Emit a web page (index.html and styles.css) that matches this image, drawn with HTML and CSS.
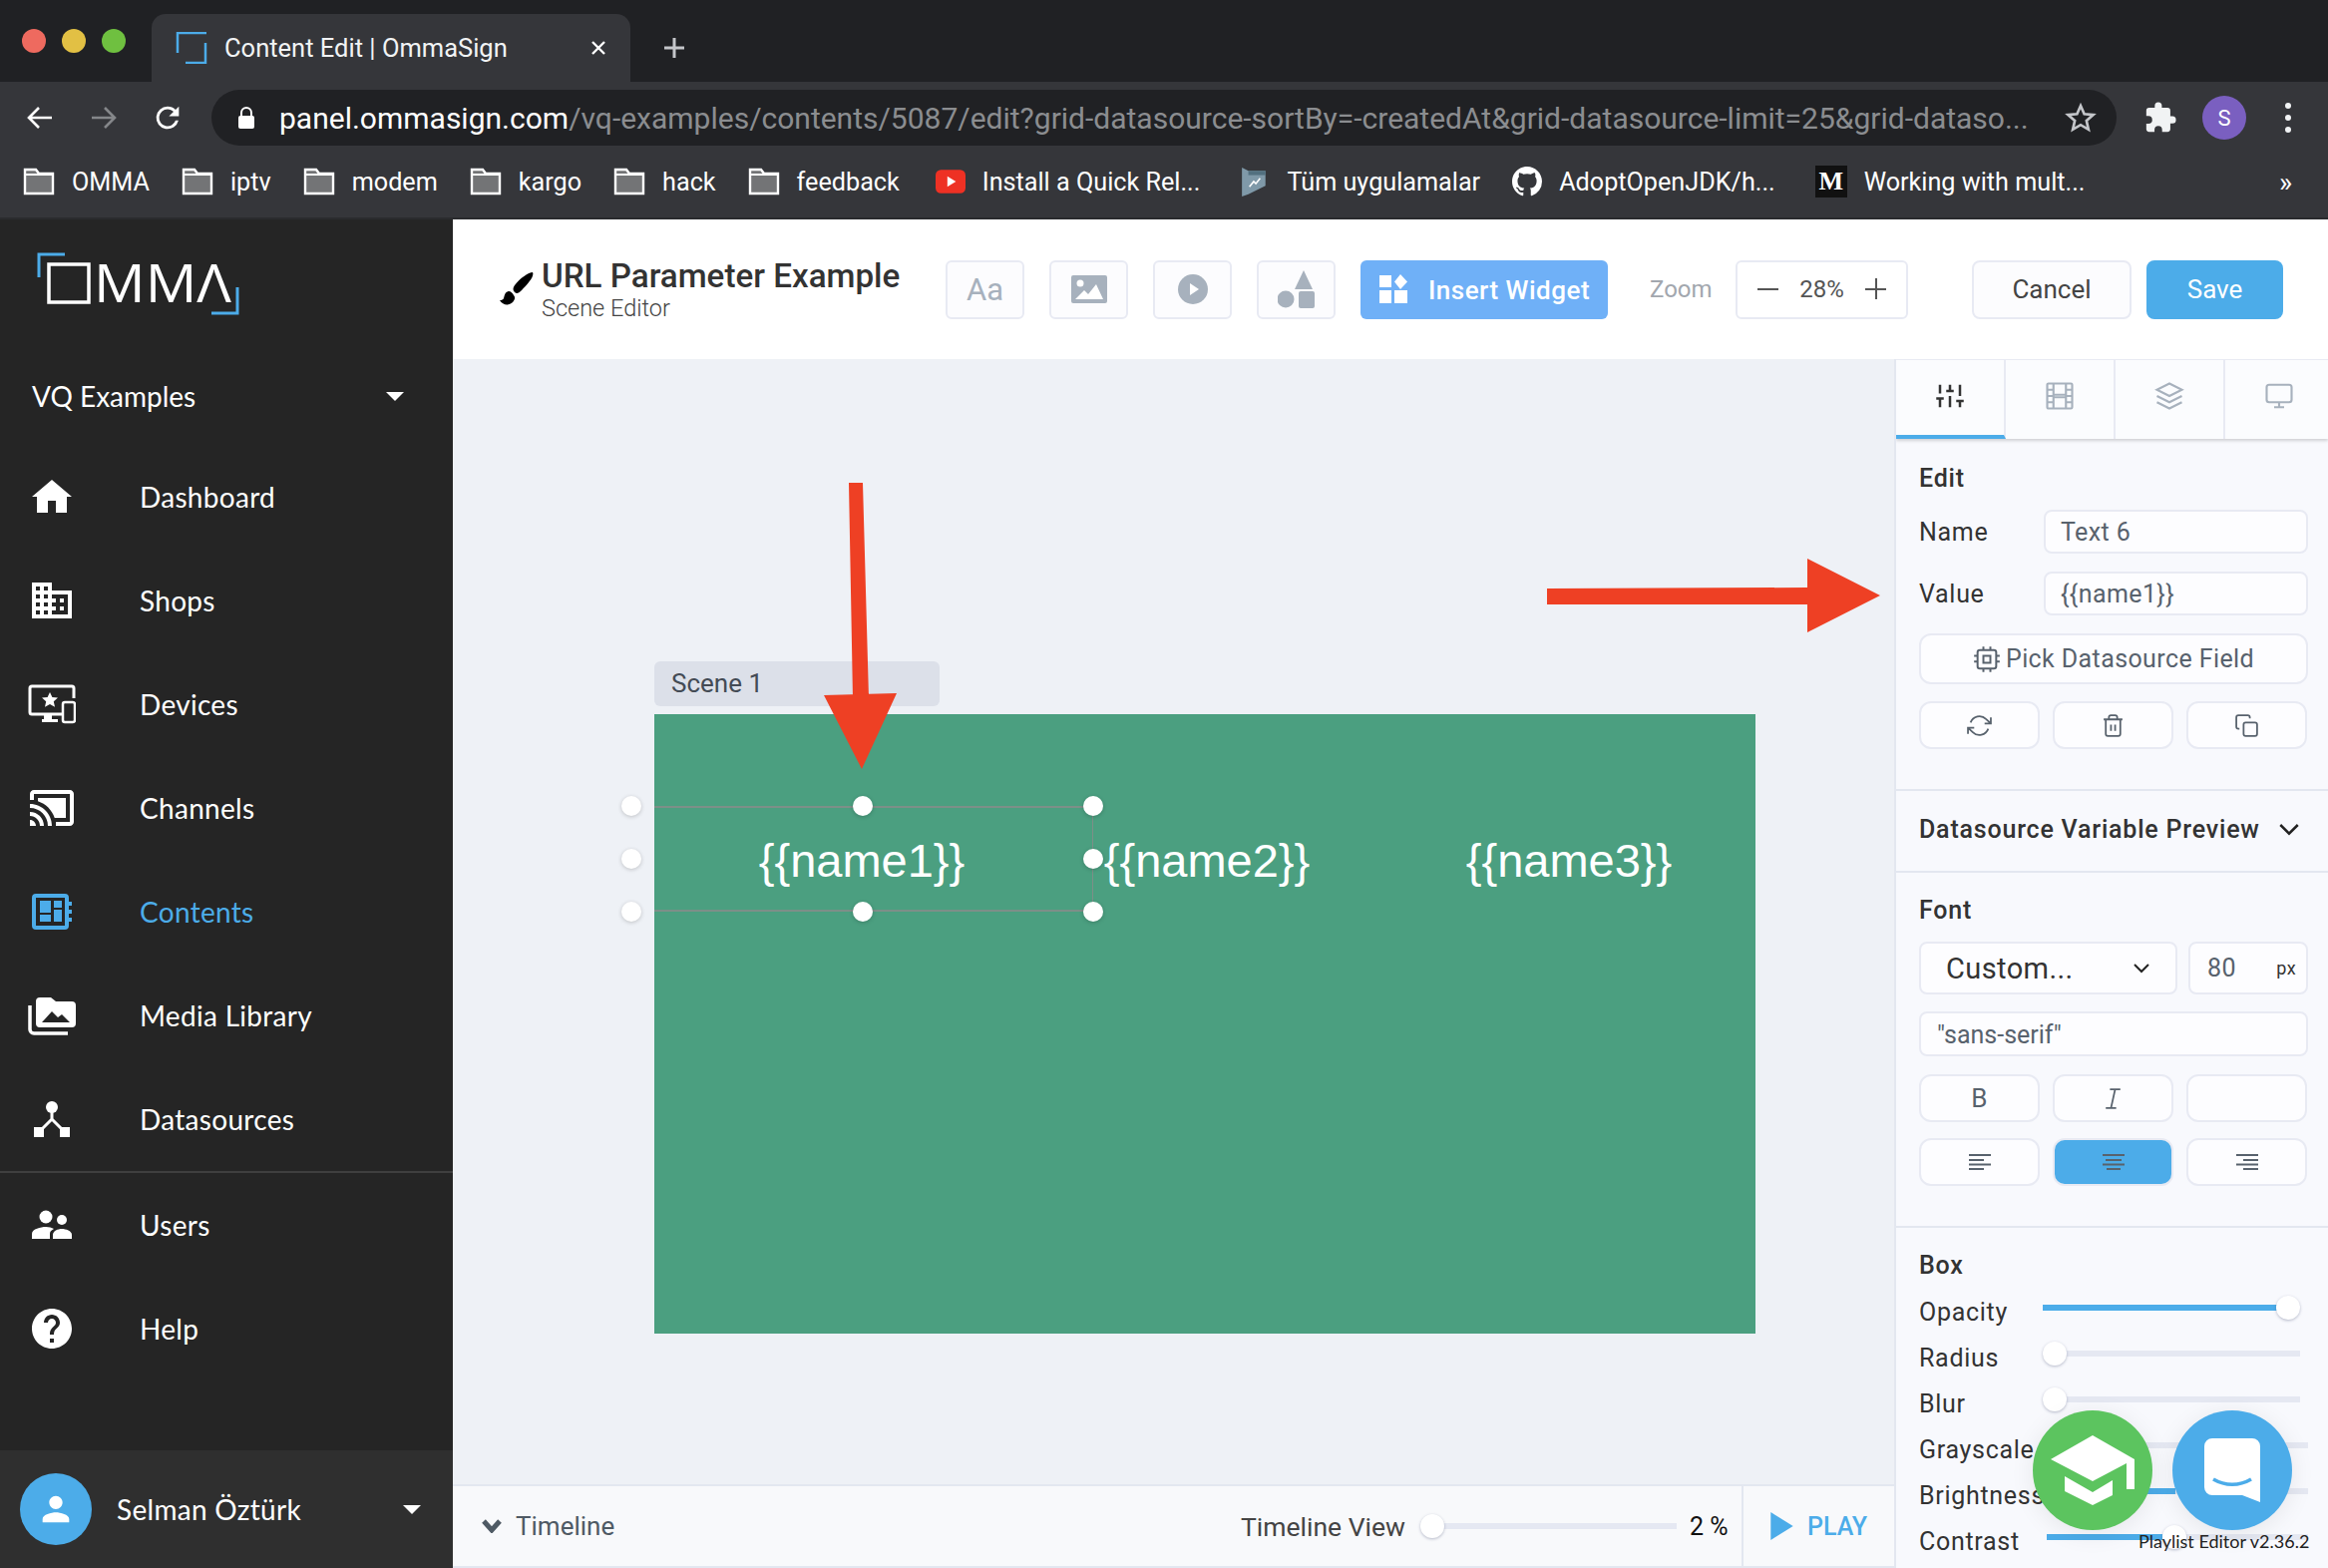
FILE: index.html
```html
<!DOCTYPE html>
<html>
<head>
	<meta charset="utf-8">
	<title>Content Edit | OmmaSign</title>
	<link rel="stylesheet" href="styles.css">
</head>
<body>

	<!-- browser chrome -->
	<div class="tabstrip">
		<div class="lights"><i class="red"></i><i class="yellow"></i><i class="green"></i></div>
		<div class="tab">
			<svg class="favicon" viewBox="0 0 32 32"><path d="M31 1H2v20M30 11v20H10" fill="none" stroke="#4cace9" stroke-width="2.5"/></svg>
			<span class="tab-title">Content Edit | OmmaSign</span>
			<svg class="tab-close" viewBox="0 0 16 16"><path d="M2 2l12 12M14 2L2 14" stroke="#fff" stroke-width="2.4"/></svg>
		</div>
		<svg class="new-tab" viewBox="0 0 24 24"><path d="M12 2v20M2 12h20" stroke="#c4c6ca" stroke-width="3"/></svg>
	</div>
	<div class="toolbar">
		<svg class="nav-ico" viewBox="0 0 28 28"><path d="M26 14H4M13 4L3 14l10 10" fill="none" stroke="#fff" stroke-width="2.6"/></svg>
		<svg class="nav-ico" viewBox="0 0 28 28"><path d="M2 14h22M15 4l10 10-10 10" fill="none" stroke="#85878a" stroke-width="2.6"/></svg>
		<svg class="nav-ico" viewBox="0 0 24 24"><path d="M17.65 6.35A7.96 7.96 0 0 0 12 4a8 8 0 1 0 7.73 10h-2.08A6 6 0 1 1 12 6c1.66 0 3.14.69 4.22 1.78L13 11h7V4l-2.35 2.35z" fill="#fff"/></svg>
		<div class="urlbar">
			<svg class="lock" viewBox="0 0 16 22"><path d="M3 9V6a5 5 0 0 1 10 0v3" fill="none" stroke="#fff" stroke-width="2"/><rect x="0" y="9" width="16" height="13" rx="2" fill="#fff"/></svg>
			<span class="url"><b>panel.ommasign.com</b>/vq-examples/contents/5087/edit?grid-datasource-sortBy=-createdAt&amp;grid-datasource-limit=25&amp;grid-dataso...</span>
			<svg class="star" viewBox="0 0 24 24"><path d="M12 3l2.7 6.2 6.8.6-5.1 4.5 1.5 6.6L12 17.4l-5.9 3.5 1.5-6.6-5.1-4.5 6.8-.6z" fill="none" stroke="#c4c6ca" stroke-width="2"/></svg>
		</div>
		<svg class="puzzle" viewBox="0 0 24 24"><path d="M20.5 11H19V7a2 2 0 0 0-2-2h-4V3.5a2.5 2.5 0 0 0-5 0V5H4a2 2 0 0 0-2 2v3.800h1.500a2.700 2.700 0 0 1 0 5.400H2V20a2 2 0 0 0 2 2h3.800v-1.500a2.700 2.700 0 0 1 5.400 0V22H17a2 2 0 0 0 2-2v-4h1.500a2.500 2.500 0 0 0 0-5z" fill="#f1f3f4"/></svg>
		<span class="profile">S</span>
		<span class="kebab"><i></i><i></i><i></i></span>
	</div>
	<div class="bookmarks">
		<a class="bm"><svg class="folder" viewBox="0 0 32 28"><path d="M2 26V2h11l3 4h14v20z" fill="#737476" stroke="#fff" stroke-width="2.400"/><path d="M2 7h28" stroke="#fff" stroke-width="2"/></svg>OMMA</a>
		<a class="bm"><svg class="folder" viewBox="0 0 32 28"><path d="M2 26V2h11l3 4h14v20z" fill="#737476" stroke="#fff" stroke-width="2.400"/><path d="M2 7h28" stroke="#fff" stroke-width="2"/></svg>iptv</a>
		<a class="bm"><svg class="folder" viewBox="0 0 32 28"><path d="M2 26V2h11l3 4h14v20z" fill="#737476" stroke="#fff" stroke-width="2.400"/><path d="M2 7h28" stroke="#fff" stroke-width="2"/></svg>modem</a>
		<a class="bm"><svg class="folder" viewBox="0 0 32 28"><path d="M2 26V2h11l3 4h14v20z" fill="#737476" stroke="#fff" stroke-width="2.400"/><path d="M2 7h28" stroke="#fff" stroke-width="2"/></svg>kargo</a>
		<a class="bm"><svg class="folder" viewBox="0 0 32 28"><path d="M2 26V2h11l3 4h14v20z" fill="#737476" stroke="#fff" stroke-width="2.400"/><path d="M2 7h28" stroke="#fff" stroke-width="2"/></svg>hack</a>
		<a class="bm last-folder"><svg class="folder" viewBox="0 0 32 28"><path d="M2 26V2h11l3 4h14v20z" fill="#737476" stroke="#fff" stroke-width="2.400"/><path d="M2 7h28" stroke="#fff" stroke-width="2"/></svg>feedback</a>
		<a class="bm clip"><svg class="bm-ico" viewBox="0 0 28 28"><rect y="3" width="28" height="22" rx="5" fill="#ee3124"/><path d="M11 9l8 5-8 5z" fill="#fff"/></svg>Install a Quick Rel...</a>
		<a class="bm"><svg class="bm-ico" viewBox="0 0 28 28"><path d="M2 1l6 3h16v14l-16 8-6 2z" fill="#7f99a8"/><path d="M8 4h16v4H8z" fill="#52707f"/><path d="M9 19l4-5 2 2 4-5" fill="none" stroke="#fff" stroke-width="1.500"/></svg>Tüm uygulamalar</a>
		<a class="bm clip"><svg class="bm-ico" viewBox="0 0 16 16"><path fill="#fff" d="M8 0C3.580 0 0 3.580 0 8c0 3.540 2.290 6.530 5.470 7.590.4.070.55-.17.55-.38 0-.19-.01-.82-.01-1.490-2.010.37-2.530-.49-2.690-.94-.09-.23-.48-.94-.82-1.130-.28-.15-.68-.52-.01-.53.63-.01 1.080.58 1.230.82.720 1.210 1.870.870 2.330.660.070-.520.280-.870.510-1.070-1.780-.2-3.640-.890-3.640-3.950 0-.870.310-1.590.820-2.150-.08-.2-.36-1.020.08-2.120 0 0 .670-.210 2.200.820.640-.180 1.320-.270 2-.270s1.360.090 2 .270c1.530-1.040 2.200-.820 2.200-.820.440 1.100.160 1.920.080 2.120.510.560.820 1.270.820 2.150 0 3.070-1.870 3.750-3.650 3.950.290.250.540.730.540 1.480 0 1.070-.010 1.930-.010 2.200 0 .210.150.460.550.380A8.010 8.010 0 0 0 16 8c0-4.420-3.580-8-8-8z"/></svg>AdoptOpenJDK/h...</a>
		<a class="bm"><span class="medium">M</span>Working with mult...</a>
		<span class="more">»</span>
	</div>

	<div class="app">
		<!-- sidebar -->
		<div class="sidebar">
			<svg class="logo" viewBox="0 0 204 63">
				<path d="M2 25V2h26M201 35v26h-26" fill="none" stroke="#4cace9" stroke-width="3"/>
				<rect x="12" y="12" width="40" height="38" fill="none" stroke="#fff" stroke-width="3.500"/>
				<text class="logo-text" x="57" y="50" textLength="138" lengthAdjust="spacingAndGlyphs">MMΛ</text>
			</svg>
			<div class="workspace">VQ Examples<i class="caret"></i></div>
			<a class="nav"><span class="nav-icon"><svg viewBox="0 0 40 36" width="40" height="36"><path d="M16 34V22h8v12h11V18h5L20 1 0 18h5v16z" fill="#fff"/></svg></span>Dashboard</a>
			<a class="nav"><span class="nav-icon"><svg viewBox="2 3 20 18" width="40" height="36"><path fill="#fff" d="M12 7V3H2v18h20V7H12zM6 19H4v-2h2v2zm0-4H4v-2h2v2zm0-4H4V9h2v2zm0-4H4V5h2v2zm4 12H8v-2h2v2zm0-4H8v-2h2v2zm0-4H8V9h2v2zm0-4H8V5h2v2zm10 12h-8v-2h2v-2h-2v-2h2v-2h-2V9h8v10zm-2-8h-2v2h2v-2zm0 4h-2v2h2v-2z"/></svg></span>Shops</a>
			<a class="nav"><span class="nav-icon"><svg viewBox="0 0 48 40" width="48" height="40"><path d="M46 14V4a2 2 0 0 0-2-2H4a2 2 0 0 0-2 2v24a2 2 0 0 0 2 2h30" fill="none" stroke="#fff" stroke-width="3"/><path d="M16 30h8v5h6v3H14v-3h2z" fill="#fff"/><rect x="35" y="18" width="12" height="20" rx="2" fill="none" stroke="#fff" stroke-width="2.500"/><path d="M22 8l2.400 5 5.600.6-4.200 3.700 1.200 5.500-5-2.900-5 2.900 1.200-5.500-4.200-3.700 5.600-.6z" fill="#fff"/></svg></span>Devices</a>
			<a class="nav"><span class="nav-icon"><svg viewBox="1 3 22 18" width="44" height="36"><path fill="#fff" d="M21 3H3c-1.100 0-2 .9-2 2v3h2V5h18v14h-7v2h7c1.100 0 2-.9 2-2V5c0-1.100-.9-2-2-2zM1 18v3h3c0-1.660-1.340-3-3-3zm0-4v2c2.760 0 5 2.240 5 5h2c0-3.870-3.130-7-7-7zm0-4v2c4.970 0 9 4.030 9 9h2c0-6.080-4.930-11-11-11zm18-3H5v1.630c3.960 1.280 7.090 4.410 8.370 8.370H19V7z"/></svg></span>Channels</a>
			<a class="nav active"><span class="nav-icon"><svg viewBox="0 0 40 36" width="40" height="36"><rect x="2" y="2" width="33" height="32" rx="2" fill="none" stroke="#4cace9" stroke-width="4"/><path d="M8 7h11v12H8zM8 21h11v7H8zM22 7h8v7h-8zM22 16h8v12h-8zM36 8h4v4h-4zM36 16h4v4h-4zM36 24h4v4h-4z" fill="#4cace9"/></svg></span>Contents</a>
			<a class="nav"><span class="nav-icon"><svg viewBox="0 0 48 40" width="48" height="40"><path d="M2 10v24a4 4 0 0 0 4 4h34" fill="none" stroke="#fff" stroke-width="3.500"/><path d="M8 6a4 4 0 0 1 4-4h11l5 4h16a4 4 0 0 1 4 4v18a4 4 0 0 1-4 4H12a4 4 0 0 1-4-4z" fill="#fff"/><path d="M14 27l10-11 6 6 4-3 8 8z" fill="#252525"/></svg></span>Media Library</a>
			<a class="nav"><span class="nav-icon"><svg viewBox="0 0 36 36" width="36" height="36"><circle cx="18" cy="6" r="6" fill="#fff"/><path d="M18 10v10M18 18L8 28M18 18l10 10" fill="none" stroke="#fff" stroke-width="3"/><path d="M0 26h10v10H0zM26 26h10v10H26z" fill="#fff"/></svg></span>Datasources</a>
			<div class="nav-sep"></div>
			<a class="nav"><span class="nav-icon"><svg viewBox="0 0 40 30" width="40" height="30"><circle cx="14" cy="7" r="6.500" fill="#fff"/><circle cx="30" cy="10" r="5" fill="#fff"/><path d="M0 29v-5c0-5 9-7 14-7 3 0 6 .7 8 2-3 1.500-4 3-4 5v5z" fill="#fff"/><path d="M21 29v-4c0-4 5-6 9-6s10 2 10 6v4z" fill="#fff"/></svg></span>Users</a>
			<a class="nav"><span class="nav-icon"><svg viewBox="2 2 20 20" width="40" height="40"><path fill="#fff" d="M12 2C6.480 2 2 6.480 2 12s4.480 10 10 10 10-4.480 10-10S17.520 2 12 2zm1 17h-2v-2h2v2zm2.070-7.750l-.9.920C13.450 12.900 13 13.500 13 15h-2v-.5c0-1.100.45-2.100 1.170-2.830l1.240-1.260c.37-.36.59-.86.59-1.410 0-1.100-.9-2-2-2s-2 .9-2 2H8c0-2.210 1.790-4 4-4s4 1.790 4 4c0 .88-.36 1.680-.93 2.250z"/></svg></span>Help</a>
			<div class="user">
				<span class="avatar"><svg viewBox="0 0 24 24" width="40" height="40"><path fill="#fff" d="M12 12c2.210 0 4-1.790 4-4s-1.790-4-4-4-4 1.790-4 4 1.790 4 4 4zm0 2c-2.670 0-8 1.340-8 4v2h16v-2c0-2.660-5.330-4-8-4z"/></svg></span>
				<span class="user-name">Selman Öztürk</span>
				<i class="caret"></i>
			</div>
		</div>

		<div class="main">
			<!-- top bar -->
			<div class="topbar">
				<svg class="brush" viewBox="0 0 34 34"><path d="M33 0c-4 0-13 6-18 13-2 3-2 5 0 7s4 1 7-2C28 12 35 4 33 0z" fill="#000"/><path d="M9 19c-4 1-4 4-5 7-.5 1.500-2 2-4 2 3 5 9 6 13 2 2-2 3-5 1-7-1-2-3-4-5-4z" fill="#000"/></svg>
				<div class="title">
					<h1>URL Parameter Example</h1>
					<p>Scene Editor</p>
				</div>
				<div class="tool-btns">
					<button class="tool aa">Aa</button>
					<button class="tool"><svg viewBox="0 0 36 28" width="36" height="28"><path fill="#a7b1bd" d="M2 0h32a2 2 0 0 1 2 2v24a2 2 0 0 1-2 2H2a2 2 0 0 1-2-2V2a2 2 0 0 1 2-2z"/><circle cx="9" cy="8" r="3.500" fill="#fff"/><path d="M4 24l9-9 4 4 8-10 7 15z" fill="#fff"/></svg></button>
					<button class="tool"><svg viewBox="0 0 30 30" width="30" height="30"><circle cx="15" cy="15" r="15" fill="#a7b1bd"/><path d="M12 9l9 6-9 6z" fill="#fff"/></svg></button>
					<button class="tool"><svg viewBox="0 0 38 38" width="38" height="38"><path d="M26 0l9 19H17z" fill="#a7b1bd"/><circle cx="8" cy="29" r="8.500" fill="#a7b1bd"/><rect x="21" y="21" width="16" height="17" rx="2" fill="#a7b1bd"/></svg></button>
				</div>
				<button class="insert"><svg viewBox="0 0 30 30" width="30" height="30"><path d="M1 1h12v12H1zM1 16h12v13H1zM16 16h13v13H16zM22 0l7 7.500-7 7.500-6-7.500z" fill="#fff"/></svg><span>Insert Widget</span></button>
				<span class="zoom-label">Zoom</span>
				<div class="zoom-box"><span class="minus"></span><span>28%</span><span class="plus"></span></div>
				<button class="cancel">Cancel</button>
				<button class="save">Save</button>
			</div>

			<div class="work">
				<div class="center">
					<div class="canvas">
						<div class="scene-tab">Scene 1</div>
						<div class="scene">
							<div class="selection"></div>
							<span class="label name1">{{name1}}</span>
							<span class="label name2">{{name2}}</span>
							<span class="label name3">{{name3}}</span>
							<i class="handle hx0 hy0"></i><i class="handle hx1 hy0"></i><i class="handle hx2 hy0"></i>
							<i class="handle hx0 hy1"></i><i class="handle hx2 hy1"></i>
							<i class="handle hx0 hy2"></i><i class="handle hx1 hy2"></i><i class="handle hx2 hy2"></i>
						</div>
						<svg class="arrows" viewBox="0 0 1445 1128">
							<path d="M397 124h14l6 216h-16zM372 337l73-2-35 76zM1097 230l261-1v-29l73 37-73 37v-28h-261z" fill="#ee4024"/>
						</svg>
					</div>
					<div class="timeline">
						<svg class="tl-chevron" viewBox="0 0 20 14"><path d="M2 2l8 9 8-9" fill="none" stroke="#4f5a64" stroke-width="5"/></svg>
						<span class="tl-title">Timeline</span>
						<span class="tl-view">Timeline View</span>
						<div class="tl-slider"><i class="thumb"></i></div>
						<span class="tl-pct">2 %</span>
						<div class="tl-play"><svg viewBox="0 0 24 30" width="23" height="28"><path d="M0 0l24 15L0 30z" fill="#4cace9"/></svg>PLAY</div>
					</div>
				</div>

				<!-- right panel -->
				<div class="panel">
					<div class="tabs">
						<div class="ptab on"><svg class="feather dark" viewBox="0 0 24 24"><path d="M4 21v-7M4 10V3M12 21v-9M12 8V3M20 21v-5M20 12V3M1 14h6M9 8h6M17 16h6"/></svg></div>
						<div class="ptab"><svg class="feather" viewBox="0 0 24 24"><rect x="2" y="2" width="20" height="20" rx="1"/><path d="M7 2v20M17 2v20M7 11h10M7 13h10M2 7h5M2 12h5M2 17h5M17 17h5M17 12h5M17 7h5"/></svg></div>
						<div class="ptab"><svg class="feather" viewBox="0 0 24 24"><path d="M12 2L2 7l10 5 10-5zM2 17l10 5 10-5M2 12l10 5 10-5"/></svg></div>
						<div class="ptab"><svg class="feather" viewBox="0 0 24 24"><rect x="2" y="3" width="20" height="14" rx="2"/><path d="M8 21h8M12 17v4"/></svg></div>
					</div>

					<div class="sec edit">
						<h5>Edit</h5>
						<div class="row"><label>Name</label><div class="input">Text 6</div></div>
						<div class="row"><label>Value</label><div class="input">{{name1}}</div></div>
						<button class="btn wide"><svg class="feather mid big" viewBox="0 0 24 24"><rect x="4" y="4" width="16" height="16" rx="2"/><rect x="9" y="9" width="6" height="6"/><path d="M9 1v3M15 1v3M9 20v3M15 20v3M20 9h3M20 14h3M1 9h3M1 14h3"/></svg>Pick Datasource Field</button>
						<div class="trio">
							<button class="btn"><svg class="feather mid" viewBox="0 0 24 24"><path d="M23 4v6h-6M1 20v-6h6M3.510 9a9 9 0 0 1 14.850-3.360L23 10M1 14l4.640 4.360A9 9 0 0 0 20.490 15"/></svg></button>
							<button class="btn"><svg class="feather mid" viewBox="0 0 24 24"><path d="M3 6h18M19 6v14a2 2 0 0 1-2 2H7a2 2 0 0 1-2-2V6m3 0V4a2 2 0 0 1 2-2h4a2 2 0 0 1 2 2v2M10 11v6M14 11v6"/></svg></button>
							<button class="btn"><svg class="feather mid" viewBox="0 0 24 24"><rect x="9" y="9" width="13" height="13" rx="2"/><path d="M5 15H4a2 2 0 0 1-2-2V4a2 2 0 0 1 2-2h9a2 2 0 0 1 2 2v1"/></svg></button>
						</div>
					</div>

					<div class="sec-head">
						<h5>Datasource Variable Preview</h5>
						<svg class="feather black" viewBox="0 0 24 24"><path d="M5 8l7 7 7-7"/></svg>
					</div>

					<div class="sec font">
						<h5>Font</h5>
						<div class="font-top">
							<div class="select">Custom...<svg class="feather black small" viewBox="0 0 24 24"><path d="M5 8l7 7 7-7"/></svg></div>
							<div class="size"><span>80</span><small>px</small></div>
						</div>
						<div class="input family">"sans-serif"</div>
						<div class="trio">
							<button class="btn glyph">B</button>
							<button class="btn"><svg class="feather mid" viewBox="0 0 24 24"><path d="M9 3h10M5 21h10M14 3l-4 18"/></svg></button>
							<button class="btn"></button>
						</div>
						<div class="trio">
							<button class="btn"><svg class="align" viewBox="0 0 22 16"><path d="M0 1h22M0 6h15M0 10.500h22M0 15h15"/></svg></button>
							<button class="btn sel"><svg class="align" viewBox="0 0 22 16"><path d="M0 1h22M3 6h16M0 10.500h22M4 15h14"/></svg></button>
							<button class="btn"><svg class="align" viewBox="0 0 22 16"><path d="M0 1h22M7 6h15M0 10.500h22M7 15h15"/></svg></button>
						</div>
					</div>

					<div class="sec box">
						<h5>Box</h5>
						<div class="srow"><label>Opacity</label><div class="track"><b style="width:246px"></b><i class="thumb" style="left:246px"></i></div></div>
						<div class="srow"><label>Radius</label><div class="track"><i class="thumb" style="left:12px"></i></div></div>
						<div class="srow"><label>Blur</label><div class="track"><i class="thumb" style="left:12px"></i></div></div>
						<div class="srow"><label>Grayscale</label><div class="track long"></div></div>
						<div class="srow"><label>Brightness</label><div class="track long"><b style="width:133px"></b></div></div>
						<div class="srow"><label>Contrast</label><div class="track long shifted"><b style="width:116px"></b><i class="thumb" style="left:128px"></i></div></div>
					</div>

					<a class="fab learn"><svg viewBox="0 0 84 70" width="84" height="70"><path d="M42 0L0 24l42 22 34-18v26h8V24z" fill="#fff"/><path d="M14 41l28 16 20-12v15L42 70 14 56z" fill="#fff"/></svg></a>
					<a class="fab chat"><svg viewBox="0 0 56 64" width="56" height="64"><path d="M8 0h40a8 8 0 0 1 8 8v56l-18-7H8a8 8 0 0 1-8-8V8a8 8 0 0 1 8-8z" fill="#fff"/><path d="M9 41c12 7 26 7 38 0" fill="none" stroke="#4cace9" stroke-width="3.500"/></svg></a>
					<span class="version">Playlist Editor v2.36.2</span>
				</div>
			</div>
		</div>
	</div>

</body>
</html>
```

FILE: styles.css
```css
html, body {
	margin: 0;
	padding: 0;
	width: 2334px;
	height: 1572px;
	overflow: hidden;
	background: #eef1f6;
	font-family: "Roboto", "Liberation Sans", sans-serif;
}

button {
	font-family: inherit;
	padding: 0;
	cursor: pointer;
}

h1, h5, p {
	margin: 0;
}

/* browser chrome */
.tabstrip {
	height: 82px;
	background: #202124;
	display: flex;
	align-items: flex-end;
}

.lights {
	width: 152px;
	height: 82px;
	display: flex;
	align-items: center;
	box-sizing: border-box;
	padding: 0 22px;
	gap: 16px;
}

.lights i {
	width: 24px;
	height: 24px;
	border-radius: 50%;
}

.red { background: #ee6a5f; }
.yellow { background: #e2c044; }
.green { background: #6fc040; }

.tab {
	width: 480px;
	height: 68px;
	background: #35363a;
	border-radius: 14px 14px 0 0;
	display: flex;
	align-items: center;
	box-sizing: border-box;
	padding: 0 24px 0 24px;
}

.favicon {
	width: 32px;
	height: 32px;
	margin-right: 17px;
}

.tab-title {
	flex: 1;
	color: #f1f3f4;
	font-size: 25.5px;
}

.tab-close {
	width: 16px;
	height: 16px;
}

.new-tab {
	width: 24px;
	height: 24px;
	margin: 0 0 22px 32px;
}

.toolbar {
	height: 64px;
	box-sizing: border-box;
	padding: 8px 0 0 26px;
	background: #35363a;
	display: flex;
	align-items: center;
}

.nav-ico {
	width: 28px;
	height: 28px;
	margin-right: 36px;
}

.nav-ico:nth-child(3) {
	width: 34px;
	height: 34px;
	margin-right: 0;
	margin-left: -3px;
}

.urlbar {
	width: 1910px;
	height: 56px;
	margin-left: 27px;
	background: #202124;
	border-radius: 28px;
	display: flex;
	align-items: center;
	box-sizing: border-box;
	padding-left: 27px;
}

.lock {
	width: 16px;
	height: 22px;
	margin-right: 25px;
}

.url {
	width: 1770px;
	color: #8b8d90;
	font-size: 30px;
	white-space: nowrap;
	overflow: hidden;
}

.url b {
	color: #fff;
	font-weight: 400;
}

.star {
	width: 32px;
	height: 32px;
	margin-left: 20px;
}

.puzzle {
	width: 34px;
	height: 34px;
	margin-left: 27px;
}

.profile {
	width: 44px;
	height: 44px;
	border-radius: 50%;
	background: #7a5fc0;
	color: #fff;
	font-size: 22px;
	display: flex;
	align-items: center;
	justify-content: center;
	margin-left: 25px;
}

.kebab {
	margin-left: 39px;
	display: flex;
	flex-direction: column;
	gap: 6px;
}

.kebab i {
	width: 6px;
	height: 6px;
	border-radius: 50%;
	background: #f1f3f4;
}

.bookmarks {
	height: 72px;
	background: #35363a;
	border-bottom: 2px solid #2a2b2e;
	display: flex;
	align-items: center;
	padding-left: 23px;
	gap: 32px;
	color: #fff;
	font-size: 25.2px;
	white-space: nowrap;
	position: relative;
}

.bm {
	display: flex;
	align-items: center;
	gap: 17px;
}

.bm.last-folder {
	margin-right: 4px;
}

.bm.clip {
	margin-right: 8px;
}

.folder {
	width: 32px;
	height: 28px;
}

.bm-ico {
	width: 30px;
	height: 30px;
}

.medium {
	width: 32px;
	height: 32px;
	background: #111;
	color: #fff;
	font: bold 26px "Liberation Serif", serif;
	display: flex;
	align-items: center;
	justify-content: center;
}

.more {
	margin-left: auto;
	margin-right: 36px;
	font-size: 28px;
}

/* app */
.app {
	display: flex;
	height: 1352px;
}

.sidebar {
	width: 454px;
	flex: none;
	background: #252525;
	color: #fff;
	display: flex;
	flex-direction: column;
	font-family: "Lato", sans-serif;
	font-size: 28px;
	position: relative;
}

.logo {
	width: 204px;
	height: 63px;
	margin: 33px 0 0 37px;
	overflow: visible;
}

.logo-text {
	font-family: "Open Sans", sans-serif;
	font-weight: 400;
	font-size: 53px;
	fill: #fff;
}

.workspace {
	height: 98px;
	margin-top: 32px;
	padding: 0 49px 0 32px;
	display: flex;
	align-items: center;
	justify-content: space-between;
	flex: none;
}

.caret {
	width: 0;
	height: 0;
	border-left: 9px solid transparent;
	border-right: 9px solid transparent;
	border-top: 9px solid #fff;
}

.nav {
	height: 104px;
	display: flex;
	align-items: center;
	letter-spacing: .3px;
	flex: none;
}

.nav-icon {
	width: 48px;
	margin: 0 64px 0 28px;
	display: flex;
	justify-content: center;
}

.nav.active {
	color: #4cace9;
}

.nav-sep {
	height: 2px;
	background: #3f3f3f;
	flex: none;
}

.user {
	margin-top: auto;
	height: 118px;
	background: #2f2f2f;
	display: flex;
	align-items: center;
	padding: 0 32px 0 20px;
}

.avatar {
	width: 72px;
	height: 72px;
	border-radius: 50%;
	background: #4cace9;
	display: flex;
	align-items: center;
	justify-content: center;
	margin-right: 25px;
}

.user-name {
	flex: 1;
	letter-spacing: .3px;
}

.main {
	flex: 1;
	display: flex;
	flex-direction: column;
	min-width: 0;
}

.topbar {
	height: 140px;
	flex: none;
	background: #fff;
	display: flex;
	align-items: center;
	padding-left: 47px;
	box-sizing: border-box;
}

.brush {
	width: 34px;
	height: 34px;
	margin-right: 8px;
}

.title {
	width: 405px;
}

.title h1 {
	font-size: 33.2px;
	font-weight: 500;
	line-height: 38px;
	color: #333;
}

.title p {
	font-size: 23.5px;
	font-weight: 300;
	line-height: 26px;
	color: #444;
}

.tool-btns {
	display: flex;
	gap: 25px;
}

.tool {
	width: 79px;
	height: 59px;
	background: #fcfcfe;
	border: 2px solid #e8eaf3;
	border-radius: 6px;
	display: flex;
	align-items: center;
	justify-content: center;
}

.aa {
	color: #a7b1bd;
	font-size: 31px;
}

.insert {
	width: 248px;
	height: 59px;
	margin-left: 25px;
	background: #6fb0f7;
	border: 0;
	border-radius: 6px;
	color: #fff;
	font-size: 26px;
	font-weight: 500;
	letter-spacing: .5px;
	display: flex;
	align-items: center;
	justify-content: center;
	gap: 20px;
}

.insert span {
	padding-top: 2px;
}

.zoom-label {
	margin-left: 42px;
	width: 86px;
	color: #a2a7ae;
	font-size: 24px;
}

.zoom-box {
	width: 173px;
	height: 59px;
	box-sizing: border-box;
	border: 2px solid #e8eaf3;
	border-radius: 6px;
	display: flex;
	align-items: center;
	justify-content: space-between;
	padding: 0 20px;
	color: #555;
	font-size: 24px;
}

.minus, .plus {
	width: 21px;
	height: 2px;
	background: #555;
	position: relative;
}

.plus:after {
	content: "";
	position: absolute;
	left: 10px;
	top: -10px;
	width: 2px;
	height: 21px;
	background: #555;
}

.cancel {
	width: 160px;
	height: 59px;
	margin-left: 64px;
	background: #fcfcfe;
	border: 2px solid #e8eaf3;
	border-radius: 8px;
	color: #444;
	font-size: 26px;
}

.save {
	width: 137px;
	height: 59px;
	margin-left: 15px;
	background: #4cace9;
	border: 0;
	border-radius: 8px;
	color: #fff;
	font-size: 26px;
}

.work {
	flex: 1;
	display: flex;
	min-height: 0;
}

.center {
	flex: 1;
	display: flex;
	flex-direction: column;
	min-width: 0;
}

.canvas {
	flex: 1;
	position: relative;
	background: #eef1f6;
}

.scene-tab {
	position: absolute;
	left: 202px;
	top: 303px;
	width: 286px;
	height: 45px;
	box-sizing: border-box;
	padding-left: 17px;
	line-height: 45px;
	background: #dce0e9;
	border-radius: 6px;
	color: #444b55;
	font-size: 26px;
}

.scene {
	position: absolute;
	left: 202px;
	top: 356px;
	width: 1104px;
	height: 621px;
	background: #4b9f80;
}

.selection {
	position: absolute;
	left: 0;
	top: 92px;
	width: 440px;
	height: 106px;
	border: solid #7d8f88;
	border-width: 2px 1px 2px 0;
	box-sizing: border-box;
}

.label {
	position: absolute;
	top: 117px;
	transform: translateX(-50%);
	color: #fff;
	font-family: "Liberation Sans", sans-serif;
	font-size: 47px;
	line-height: 60px;
	white-space: nowrap;
}

.name1 { left: 208px; }
.name2 { left: 554px; }
.name3 { left: 917px; }

.handle {
	position: absolute;
	width: 20px;
	height: 20px;
	margin: -10px 0 0 -10px;
	border-radius: 50%;
	background: #fff;
	box-shadow: 0 1px 4px rgba(0, 0, 0, .2);
}

.hx0 { left: -23px; }
.hx1 { left: 209px; }
.hx2 { left: 440px; }
.hy0 { top: 92px; }
.hy1 { top: 145px; }
.hy2 { top: 198px; }

.arrows {
	position: absolute;
	left: 0;
	top: 0;
	width: 1445px;
	height: 1128px;
}

.timeline {
	height: 84px;
	flex: none;
	box-sizing: border-box;
	border-top: 2px solid #e3e7f0;
	border-bottom: 2px solid #e3e7f0;
	background: #f8f9fb;
	display: flex;
	align-items: center;
	padding-left: 29px;
	color: #444;
	font-size: 26.5px;
}

.tl-chevron {
	width: 20px;
	height: 14px;
	margin-right: 14px;
}

.tl-title {
	width: 727px;
	color: #4f5a64;
	font-size: 26px;
}

.tl-view {
	width: 192px;
}

.tl-slider {
	width: 245px;
	height: 6px;
	background: #e5e8f2;
	position: relative;
}

.tl-slider .thumb {
	left: 0;
}

.tl-pct {
	margin-left: 13px;
	width: 52px;
	color: #111;
	font-size: 25px;
}

.tl-play {
	height: 80px;
	flex: 1;
	border-left: 2px solid #e3e7f0;
	display: flex;
	align-items: center;
	gap: 14px;
	padding-left: 27px;
	color: #4cace9;
	font-weight: 500;
	font-size: 25px;
}

/* right panel */
.panel {
	width: 435px;
	flex: none;
	box-sizing: border-box;
	border-left: 2px solid #e3e7f0;
	background: #f8f9fd;
	position: relative;
	overflow: hidden;
	color: #333;
	font-size: 25px;
	letter-spacing: .4px;
}

.tabs {
	height: 80px;
	display: flex;
	background: #fbfcfe;
	border-top: 1px solid #e8eaf3;
	box-sizing: border-box;
	box-shadow: 0 2px 3px rgba(0, 0, 0, .16);
	position: relative;
}

.ptab {
	width: 110px;
	flex: none;
	box-sizing: border-box;
	border-right: 2px solid #e8eaf3;
	display: flex;
	align-items: center;
	justify-content: center;
	padding-bottom: 8px;
}

.ptab.on {
	border-bottom: 4px solid #4cace9;
	padding-bottom: 4px;
}

.feather {
	width: 30px;
	height: 30px;
	fill: none;
	stroke: #a7b1bd;
	stroke-width: 1.700;
}

.feather.dark { stroke: #333; stroke-width: 2; }
.feather.mid { stroke: #58626d; width: 25px; height: 25px; }
.feather.mid.big { width: 28px; height: 28px; }
.feather.black { stroke: #222; stroke-width: 2; }
.feather.small { width: 24px; height: 24px; }

.sec {
	padding: 23px 20px 0 23px;
	border-bottom: 2px solid #e3e7f0;
}

.sec h5, .sec-head h5 {
	font-size: 25px;
	font-weight: 500;
	line-height: 30px;
	color: #333;
	letter-spacing: .8px;
}

.edit {
	height: 353px;
	box-sizing: border-box;
	padding-top: 25px;
}

.edit h5 {
	margin-bottom: 16px;
}

.row {
	display: flex;
	align-items: center;
	margin-bottom: 18px;
}

.row label {
	width: 125px;
	letter-spacing: .7px;
}

.input {
	flex: 1;
	height: 44px;
	line-height: 41px;
	box-sizing: border-box;
	padding-left: 15px;
	background: #fdfdff;
	border: 2px solid #e8eaf3;
	border-radius: 8px;
	color: #58626d;
}

.btn {
	background: #fdfdff;
	border: 2px solid #e8eaf3;
	border-radius: 12px;
	color: #58626d;
	font-size: 25px;
	letter-spacing: .4px;
	display: flex;
	align-items: center;
	justify-content: center;
}

.btn.wide {
	width: 100%;
	height: 51px;
	gap: 5px;
	margin-bottom: 17px;
}

.trio {
	display: grid;
	grid-template-columns: 121px 121px 121px;
	gap: 13px;
	height: 48px;
}

.sec-head {
	height: 82px;
	box-sizing: border-box;
	border-bottom: 2px solid #e3e7f0;
	padding: 0 24px 2px 23px;
	display: flex;
	align-items: center;
	justify-content: space-between;
}

.font {
	height: 356px;
	box-sizing: border-box;
}

.font-top {
	display: flex;
	justify-content: space-between;
	margin: 16px 0 17px;
}

.select, .size {
	height: 53px;
	box-sizing: border-box;
	background: #fdfdff;
	border: 2px solid #e8eaf3;
	border-radius: 8px;
	display: flex;
	align-items: center;
	justify-content: space-between;
}

.select {
	width: 259px;
	padding: 0 22px 0 25px;
	font-size: 29px;
}

.size {
	width: 120px;
	padding: 0 10px 0 17px;
	color: #58626d;
}

.size small {
	font-size: 18px;
	color: #333;
}

.input.family {
	height: 45px;
	line-height: 43px;
	padding-left: 16px;
	margin-bottom: 18px;
	letter-spacing: 0;
}

.font .trio + .trio {
	margin-top: 16px;
}

.glyph {
	font-size: 26px;
}

.align {
	width: 22px;
	height: 16px;
	fill: none;
	stroke: #58626d;
	stroke-width: 2;
}

.btn.sel {
	background: #4cace9;
}

.box {
	border-bottom: 0;
}

.box h5 {
	margin-bottom: 8px;
}

.srow {
	height: 46px;
	display: flex;
	align-items: center;
}

.srow label {
	width: 124px;
	flex: none;
	letter-spacing: .7px;
}

.track {
	width: 258px;
	height: 6px;
	background: #e5e8f2;
	position: relative;
	margin-top: -8px;
}

.track b {
	position: absolute;
	left: 0;
	top: 0;
	height: 6px;
	background: #4cace9;
}

.track.long {
	width: 266px;
}

.track.shifted {
	margin-left: 4px;
	width: 262px;
}

.thumb {
	position: absolute;
	top: 3px;
	width: 24px;
	height: 24px;
	margin: -12px 0 0 -12px;
	border-radius: 50%;
	background: #fff;
	box-shadow: 0 1px 3px rgba(60, 70, 110, .35);
}

.fab {
	position: absolute;
	top: 1054px;
	width: 120px;
	height: 120px;
	border-radius: 50%;
	display: flex;
	align-items: center;
	justify-content: center;
	box-shadow: 0 4px 24px rgba(0, 0, 0, .08);
}

.learn {
	left: 137px;
	background: #5cc45f;
}

.chat {
	left: 277px;
	background: #4cace9;
}

.version {
	position: absolute;
	left: 243px;
	top: 1174px;
	font-family: "Lato", sans-serif;
	font-size: 18px;
	letter-spacing: 0;
	line-height: 22px;
	color: #222;
	white-space: nowrap;
}
```
